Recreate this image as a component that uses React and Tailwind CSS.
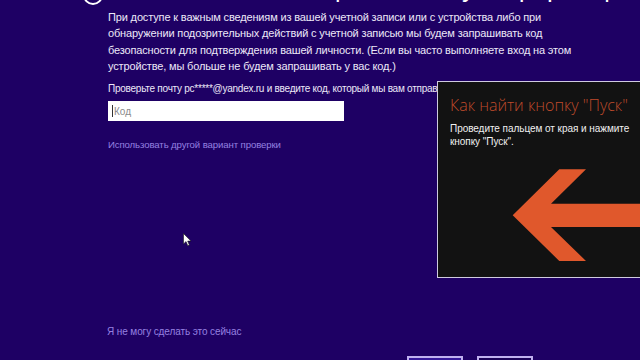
import React from 'react';

function Arrow() {
  return (
    <svg className="absolute left-0 top-0" width="205" height="197" viewBox="0 0 205 197">
      <polygon
        points="74.7,133.3 121.3,87.3 148,87.3 113,121.7 205,121.7 205,145 113,145 148,179 121.3,179"
        fill="#e0582c"
      />
    </svg>
  );
}

function Cursor() {
  return (
    <svg className="absolute left-[183px] top-[233px]" width="9" height="14" viewBox="0 0 9 14">
      <path d="M0.5 0.5 L0.5 11 L3 8.6 L4.8 12.8 L6.4 12.1 L4.7 8.1 L8 8.1 Z" fill="#ffffff" stroke="#1a1a1a" strokeWidth="0.6" />
    </svg>
  );
}

export default function App() {
  return (
    <div
      className="relative w-[640px] h-[360px] overflow-hidden bg-[#1e0064] text-white"
      style={{ fontFamily: '"Liberation Sans", Arial, sans-serif' }}
    >
      <div className="flex flex-col">
        {/* cut-off header */}
        <div className="flex items-end gap-[12px] pl-[83px] -mt-[29px] h-[30px]">
          <div className="w-[20px] h-[20px] rounded-full border-2 border-white shrink-0 -mb-[4px]"></div>
          <div className="text-[26px] leading-[26px] font-light text-white whitespace-nowrap">
            Помогите нам защитить вашу информацию
          </div>
        </div>

        <div className="pl-[108px] mt-[8px] text-[11px] leading-[16.3px] text-[#ece8f8] tracking-[-0.15px]">
          <p>При доступе к важным сведениям из вашей учетной записи или с устройства либо при</p>
          <p>обнаружении подозрительных действий с учетной записью мы будем запрашивать код</p>
          <p>безопасности для подтверждения вашей личности. (Если вы часто выполняете вход на этом</p>
          <p>устройстве, мы больше не будем запрашивать у вас код.)</p>
        </div>

        <div className="pl-[108px] mt-[7px] text-[10px] leading-[16px] text-[#ece8f8] tracking-[-0.25px] whitespace-nowrap">
          Проверьте почту pc*****@yandex.ru и введите код, который мы вам отправили.
        </div>

        <div className="pl-[108px] mt-[4px]">
          <div className="w-[236px] h-[20px] bg-white flex items-center pl-[4px]">
            <div className="w-[1px] h-[12px] bg-[#333]"></div>
            <span className="ml-[1px] text-[10px] text-[#8a8a8a]">Код</span>
          </div>
        </div>

        <div className="pl-[108px] mt-[16px] text-[9.6px] leading-[16px] text-[#9580e0] tracking-[-0.1px]">
          Использовать другой вариант проверки
        </div>

        <div className="pl-[107px] mt-[171px] text-[10px] leading-[16px] text-[#9580e0] tracking-[-0.1px]">
          Я не могу сделать это сейчас
        </div>

        <div className="flex gap-[14px] pl-[407px] mt-[16px]">
          <div className="w-[56px] h-[30px] border-2 border-[#c0b0f0] bg-[#35169a]"></div>
          <div className="w-[56px] h-[30px] border-2 border-[#c0b0f0] bg-[#1a0058]"></div>
        </div>
      </div>

      <Cursor />

      {/* tooltip overlay */}
      <div className="absolute left-[437px] top-[81px] w-[205px] h-[197px] bg-[#121212] border border-[#cfcbe0]">
        <Arrow />
        <div className="relative pl-[12px] pt-[12px]">
          <div className="text-[16px] leading-[22px] font-light text-[#bf4a2b] whitespace-nowrap" style={{ fontFamily: '"Open Sans", "Liberation Sans", sans-serif' }}>
            Как найти кнопку "Пуск"
          </div>
          <div className="mt-[6px] text-[10px] leading-[13px] text-[#f0f0f0] tracking-[-0.05px]">
            <p>Проведите пальцем от края и нажмите</p>
            <p>кнопку "Пуск".</p>
          </div>
        </div>
      </div>
    </div>
  );
}
